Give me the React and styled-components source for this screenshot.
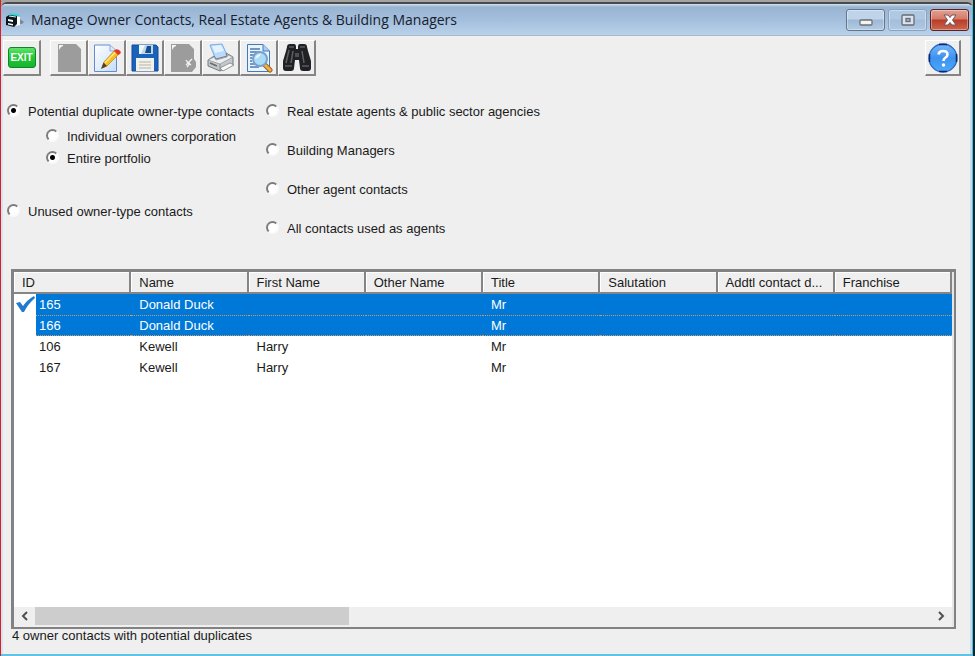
import React, { useState } from "react";
import styled, { createGlobalStyle, css } from "styled-components";

const GlobalStyle = createGlobalStyle`
    * {
        box-sizing: border-box;
    }

    body {
        margin: 0;
        font-family: "Liberation Sans", Arial, sans-serif;
        font-size: 13px;
        line-height: 20px;
        color: #1a1a1a;
        background: #efefef;
    }

    button, input {
        margin: 0;
        padding: 0;
        font: inherit;
    }
`;

const Screen = styled.div`
    display: flex;
    min-height: 100vh;
    padding-top: 2px;
    border-left: 1px solid #e01b24;
    border-right: 2px solid #10242c;
    background: #a4a4a4;
`;

const Window = styled.main`
    flex: 1;
    min-width: 0;
    display: flex;
    flex-direction: column;
    border-top: 2px solid #4a4a4a;
    border-right: 1px solid #3fc0e6;
    border-bottom: 2px solid #5fc3e4;
    border-radius: 6px 6px 0 0;
    background: #efefef;
    box-shadow: inset 2px 0 #d3e6f4, inset -2px 0 #c3dcf2;
`;

const TitleBar = styled.header`
    display: flex;
    align-items: center;
    height: 32px;
    padding: 0 3px 0 4px;
    border-bottom: 1px solid #a9b9cb;
    border-radius: 5px 5px 0 0;
    background: linear-gradient(#d4e2f0 0, #99b4d1 3px, #a5c0de 55%, #b9d1ea);
`;

const WindowTitle = styled.h1`
    flex: 1;
    margin: 0 0 0 6px;
    font-family: "Open Sans", "Noto Sans", sans-serif;
    font-size: 14px;
    font-weight: 400;
    line-height: 22px;
    white-space: nowrap;
    color: #17202c;
`;

const WindowButtons = styled.div`
    display: flex;
    gap: 3px;
`;

const captionColors = {
    normal: css`
        border-color: #63768e;
        background: linear-gradient(#c0d4e9 45%, #9db8d5 50%, #b4cce5);
    `,
    muted: css`
        border-color: #8ba3bf;
        background: linear-gradient(#b0c9e3 45%, #a3bedb 50%, #b0c8e3);
    `,
    close: css`
        border-color: #5c2223;
        background: linear-gradient(#e2a093 0, #d67a68 45%, #b83c25 50%, #cb6650);
    `,
};

const CaptionButton = styled.button`
    display: grid;
    place-items: center;
    width: 39px;
    height: 22px;
    border: 1px solid;
    border-radius: 3px;
    box-shadow: inset 0 0 0 1px rgba(255, 255, 255, 0.35);
    ${({ $tone }) => captionColors[$tone]}
`;

const Toolbar = styled.div`
    display: flex;
    padding: 4px 11px 0 2px;
`;

const ToolGroup = styled.div`
    display: flex;
    margin-left: ${({ $end }) => ($end ? "auto" : "9px")};
`;

const ToolButton = styled.button`
    display: grid;
    place-items: center;
    width: ${({ $narrow }) => ($narrow ? "36px" : "38px")};
    height: 36px;
    border: 1px solid #fff;
    border-right: 2px solid #858585;
    border-bottom: 2px solid #858585;
    background: #efefef;

    svg {
        display: block;
    }
`;

const ExitBadge = styled.span`
    width: 28px;
    height: 21px;
    border: 1px solid #12832a;
    border-radius: 3px;
    background: linear-gradient(#5fe36c, #22c837 50%, #14b52b);
    font-size: 10px;
    font-weight: 700;
    line-height: 19px;
    text-align: center;
    color: #fff;
`;

const Options = styled.form`
    display: grid;
    grid-template-columns: 259px 1fr;
    padding: 26px 12px 0 6px;
`;

const OptionList = styled.div`
    display: flex;
    flex-direction: column;
    align-items: flex-start;
    gap: ${({ $gap }) => $gap};
`;

const SubOptions = styled.div`
    display: flex;
    flex-direction: column;
    gap: 2px;
    padding: 5px 0 33px 39px;
`;

const Option = styled.label`
    display: flex;
    gap: 8px;
    white-space: nowrap;
`;

const Radio = styled.input`
    appearance: none;
    flex: none;
    width: 13px;
    height: 13px;
    margin-top: 2px;
    border: 2px solid;
    border-color: #7c7c7c #fafafa #fafafa #7c7c7c;
    border-radius: 50%;
    background: #fff;

    &:checked {
        background: radial-gradient(circle, #000 0 2px, #fff 3px);
    }
`;

const ListFrame = styled.section`
    flex: 1;
    display: flex;
    flex-direction: column;
    margin: 30px 16px 0 10px;
    border: 3px solid #828282;
    border-right-width: 2px;
    border-bottom-width: 2px;
    background: #fff;
    box-shadow: inset -2px 0 #e6e6e6;
    padding-right: 2px;
`;

const ContactTable = styled.table`
    width: 100%;
    table-layout: fixed;
    border-spacing: 0;
`;

const HeadCell = styled.th`
    height: 22px;
    padding: 2px 8px 0;
    border-right: 2px solid #858585;
    border-bottom: 2px solid #858585;
    background: #efefef;
    box-shadow: inset 1px 1px #fff;
    font-weight: 400;
    line-height: 18px;
    text-align: left;
    white-space: nowrap;
`;

const rowColors = css`
    ${({ $selected }) => $selected && css`
        background: #0078d7;
        color: #fff;
    `}
    ${({ $focused }) => $focused && css`
        border-top: 1px dotted #c99a64;
        border-bottom: 1px dotted #c99a64;
    `}
`;

const Cell = styled.td`
    height: 21px;
    padding: 0 8px;
    line-height: ${({ $focused }) => ($focused ? "19px" : "21px")};
    white-space: nowrap;
    ${rowColors}
`;

const IdCell = styled.td`
    height: 21px;
    padding: 0;
`;

const IdContent = styled.div`
    display: grid;
    grid-template-columns: 22px 1fr;
    height: 21px;
`;

const IdValue = styled.span`
    padding-left: 3px;
    line-height: ${({ $focused }) => ($focused ? "19px" : "21px")};
    ${rowColors}
`;

const ScrollBar = styled.div`
    display: flex;
    height: 20px;
    margin-top: auto;
    background: #efefef;
`;

const ScrollButton = styled.button`
    display: grid;
    place-items: center;
    width: 21px;
    height: 18px;
    border: 0;
    background: none;
`;

const ScrollTrack = styled.div`
    flex: 1;
`;

const ScrollThumb = styled.div`
    width: 35%;
    height: 18px;
    background: #cdcdcd;
`;

const StatusText = styled.p`
    margin: 0 11px;
    height: 25px;
    line-height: 14px;
`;

const AppIcon = () => (
    <svg width="20" height="18" viewBox="0 0 20 18" aria-hidden="true">
        <path d="M4 2 L13 3 L15 5 L5 5 Z" fill="#35d6d6" />
        <path d="M10 5 L15 6 V14 L10 15 Z" fill="#fff" />
        <path d="M15 8 L19 11 L17 13 L15 13 Z" fill="#7c8a97" />
        <path d="M1 6 L4 4 L12 5 V13 L9 16 L1 14 Z" fill="#0b171c" />
        <path d="M3 8 L8 9 V11 L3 10 Z M3 12 L8 13 V14.500 L3 13.500 Z" fill="#fff" />
        <path d="M4 5 L11 6" stroke="#dff6f8" />
    </svg>
);

const BlankIcon = () => (
    <svg width="26" height="30" viewBox="0 0 26 30" aria-hidden="true">
        <path d="M2 1 H20 L25 6 V29 H2 Z" fill="#9c9c9c" />
        <path d="M3 7 V2 H7 V3 L5 4 Z" fill="#f5f5f5" />
    </svg>
);

const DeleteIcon = () => (
    <svg width="26" height="30" viewBox="0 0 26 30" aria-hidden="true">
        <path d="M1 1 H19 L24 6 V16 L26 19 V24 L22 29 H1 Z" fill="#9c9c9c" />
        <path d="M2 7 V2 H6 V3 L4 4 Z" fill="#f5f5f5" />
        <path d="M16 17 L18 20 L16 22 M22 16 L18 20 L21 22 M17 24 L20 20" fill="none" stroke="#f2f2f2" strokeWidth="1.300" />
    </svg>
);

const EditIcon = () => (
    <svg width="30" height="30" viewBox="0 0 30 30" aria-hidden="true">
        <defs>
            <linearGradient id="paper" x1="0" y1="0" x2="1" y2="1">
                <stop offset="0" stopColor="#fff" />
                <stop offset="1" stopColor="#c3ddfb" />
            </linearGradient>
        </defs>
        <path d="M2.500 2 H18 L24.500 8 V28.500 H2.500 Z" fill="url(#paper)" stroke="#6689d3" />
        <path d="M18 2 V8 H24" fill="#dceafe" stroke="#8aa9df" />
        <path d="M10 25 L12 19 L23 7 L27 11 L15 23 Z" fill="#f7bd20" stroke="#c98a14" strokeWidth="0.800" />
        <path d="M13 20 L24 8.500" stroke="#ffe784" strokeWidth="1.500" />
        <path d="M9 26 L11.500 19.500 L15 23 Z" fill="#5b3d24" />
        <path d="M22 8 Q24 5 27 7 Q30 9 28 11 L26 12 Z" fill="#e0372d" />
    </svg>
);

const SaveIcon = () => (
    <svg width="28" height="28" viewBox="0 0 28 28" aria-hidden="true">
        <path d="M1 1 H25 L27 3 V27 H1 Z" fill="#1964ba" stroke="#114c92" />
        <path d="M8 1 H22 V10 H8 Z" fill="#bdd6eb" />
        <path d="M8 1 H14 L10 10 H8 Z" fill="#eef6fc" />
        <path d="M16 2 H20 V9 H14 Z" fill="#174c8c" />
        <path d="M5 14 H23 V27 H5 Z" fill="#f2f2ea" />
        <path d="M8 18 H20 M8 21 H20 M8 24 H20" stroke="#b4b4ac" />
    </svg>
);

const PrintIcon = () => (
    <svg width="30" height="30" viewBox="0 0 30 30" aria-hidden="true">
        <path d="M4 2 L16 1 L22 14 L10 17 Z" fill="#b8dafc" stroke="#7aabe4" />
        <path d="M6 3 L15 2 L18 8 L9 10 Z" fill="#e4f2ff" />
        <path d="M2 17 L8 13 L10 16 L21 13 L20 10 L27 14 V22 L14 28 L2 23 Z" fill="#c4c8cb" stroke="#747b80" />
        <path d="M2 17 L14 21 L27 14 L22 12 L21 14 L10 17 L8 14 Z" fill="#eceeef" stroke="#8b9195" strokeWidth="0.700" />
        <path d="M14 21 V28" stroke="#858b90" />
        <path d="M14 25 L24 20 L28 22 L17 28 Z" fill="#f7f8f8" stroke="#7d8489" strokeWidth="0.800" />
        <path d="M4 20 L11 23" stroke="#666c70" strokeWidth="1.500" />
    </svg>
);

const PreviewIcon = () => (
    <svg width="30" height="30" viewBox="0 0 30 30" aria-hidden="true">
        <path d="M3.500 1.500 H19 L25.500 8 V28.500 H3.500 Z" fill="#e9f4ff" stroke="#3f79c2" />
        <path d="M19 1.500 V8 H25" fill="#a8cff5" stroke="#3f79c2" />
        <path d="M6 6 H16 M6 9 H16 M6 12 H11 M6 15 H8 M6 18 H8 M6 21 H11 M6 24 H15" stroke="#4b79ad" strokeWidth="1.500" />
        <path d="M20 21 L26 27" stroke="#9b6218" strokeWidth="5" strokeLinecap="round" />
        <path d="M20 21 L26 27" stroke="#f2ad43" strokeWidth="3" strokeLinecap="round" />
        <circle cx="16" cy="16" r="7" fill="#a9dcfb" stroke="#7d9fc8" strokeWidth="2" />
        <path d="M11 16 Q12 11 17 11 Q15 15 11 16" fill="#e9f9ff" />
    </svg>
);

const BinocularsIcon = () => (
    <svg width="30" height="30" viewBox="0 0 30 30" aria-hidden="true">
        <path d="M5 4 Q5 1 8 1 H12 Q14 1 14 4 V6 H16 V4 Q16 1 18 1 H22 Q25 1 25 4 L26 8 L29 18 V25 Q29 28 26 28 H21 Q18 28 18 25 L17 17 H13 L12 25 Q12 28 9 28 H4 Q1 28 1 25 V18 L4 8 Z" fill="#202124" />
        <path d="M7 7 L4 20 M11 8 L9 20 M20 8 L22 20" stroke="#5d6064" strokeWidth="1.500" />
        <path d="M3 23 H10 M20 23 H27 M7 4 H12 M18 4 H23" stroke="#4a4d51" strokeWidth="2" />
        <path d="M13 10 H17 V14 H13 Z" fill="#4d5054" />
    </svg>
);

const HelpIcon = () => (
    <svg width="30" height="30" viewBox="0 0 30 30" aria-hidden="true">
        <defs>
            <linearGradient id="help" x1="0" y1="0" x2="0" y2="1">
                <stop offset="0" stopColor="#77b8fa" />
                <stop offset="0.500" stopColor="#3d92ee" />
                <stop offset="1" stopColor="#4fa9fa" />
            </linearGradient>
        </defs>
        <circle cx="15" cy="15" r="14" fill="url(#help)" stroke="#2c68c4" strokeWidth="1.300" />
        <path d="M11 1.500 H19 M11 28.500 H19 M1.500 11 V19 M28.500 11 V19" stroke="#13256e" strokeWidth="1.500" />
        <path d="M10.500 11.500 Q11 8 15 8 Q19.500 8 19.500 11.500 Q19.500 13.500 17 15 Q15.500 16 15.500 18" fill="none" stroke="#fff" strokeWidth="2.600" />
        <circle cx="15.500" cy="22" r="1.700" fill="#fff" />
    </svg>
);

const CheckIcon = () => (
    <svg width="21" height="20" viewBox="0 0 21 20" role="img" aria-label="Marked">
        <path d="M2 9 L6 8 L9 12 Q13 6 20 2 L21 4 Q14 10 10 18 H8 Z" fill="#2378cf" />
    </svg>
);

const Chevron = ({ d }) => (
    <svg width="9" height="10" viewBox="0 0 9 10" aria-hidden="true">
        <path d={d} fill="none" stroke="#505050" strokeWidth="2" />
    </svg>
);

const MinimizeIcon = () => (
    <svg width="14" height="14" viewBox="0 0 14 14" aria-hidden="true">
        <rect x="1" y="7" width="12" height="5" rx="1" fill="#f4f4f4" stroke="#6b6f76" strokeWidth="1.300" />
    </svg>
);

const MaximizeIcon = () => (
    <svg width="14" height="12" viewBox="0 0 14 12" aria-hidden="true">
        <rect x="1" y="1" width="12" height="10" rx="1" fill="#dde3ea" stroke="#666c76" strokeWidth="1.300" />
        <rect x="5" y="4.500" width="4" height="3" fill="#9db9d6" stroke="#666c76" strokeWidth="1.300" />
    </svg>
);

const CloseIcon = () => (
    <svg width="14" height="12" viewBox="0 0 14 12" aria-hidden="true">
        <path d="M1 1 H5 L7 3.500 L9 1 H13 L9.500 6 L13 11 H9 L7 8.500 L5 11 H1 L4.500 6 Z" fill="#fff" stroke="#6e565a" />
    </svg>
);

const tools = [
    { label: "New", Icon: BlankIcon },
    { label: "Edit", Icon: EditIcon },
    { label: "Save", Icon: SaveIcon },
    { label: "Delete", Icon: DeleteIcon },
    { label: "Print", Icon: PrintIcon },
    { label: "Preview", Icon: PreviewIcon },
    { label: "Find", Icon: BinocularsIcon },
];

const columns = [
    "ID",
    "Name",
    "First Name",
    "Other Name",
    "Title",
    "Salutation",
    "Addtl contact d...",
    "Franchise",
];

const contacts = [
    { id: 165, name: "Donald Duck", firstName: "", title: "Mr", marked: true, selected: true },
    { id: 166, name: "Donald Duck", firstName: "", title: "Mr", selected: true, focused: true },
    { id: 106, name: "Kewell", firstName: "Harry", title: "Mr" },
    { id: 167, name: "Kewell", firstName: "Harry", title: "Mr" },
];

const agentOptions = [
    { value: "agents", label: "Real estate agents & public sector agencies" },
    { value: "managers", label: "Building Managers" },
    { value: "other", label: "Other agent contacts" },
    { value: "all", label: "All contacts used as agents" },
];

function RadioOption({ group, value, selected, onSelect, children }) {
    return (
        <Option>
            <Radio
                type="radio"
                name={group}
                value={value}
                checked={selected === value}
                onChange={() => onSelect(value)}
            />
            {children}
        </Option>
    );
}

function ContactRow({ contact }) {
    const state = { $selected: contact.selected, $focused: contact.focused };

    return (
        <tr>
            <IdCell>
                <IdContent>
                    <span>{contact.marked && <CheckIcon />}</span>
                    <IdValue {...state}>{contact.id}</IdValue>
                </IdContent>
            </IdCell>
            <Cell {...state}>{contact.name}</Cell>
            <Cell {...state}>{contact.firstName}</Cell>
            <Cell {...state} />
            <Cell {...state}>{contact.title}</Cell>
            <Cell {...state} />
            <Cell {...state} />
            <Cell {...state} />
        </tr>
    );
}

export default function App() {
    const [filter, setFilter] = useState("duplicates");
    const [scope, setScope] = useState("portfolio");

    return (
        <>
            <GlobalStyle />
            <Screen>
                <Window>
                    <TitleBar>
                        <AppIcon />
                        <WindowTitle>Manage Owner Contacts, Real Estate Agents &amp; Building Managers</WindowTitle>
                        <WindowButtons>
                            <CaptionButton $tone="normal" aria-label="Minimize"><MinimizeIcon /></CaptionButton>
                            <CaptionButton $tone="muted" aria-label="Maximize"><MaximizeIcon /></CaptionButton>
                            <CaptionButton $tone="close" aria-label="Close"><CloseIcon /></CaptionButton>
                        </WindowButtons>
                    </TitleBar>

                    <Toolbar>
                        <ToolButton><ExitBadge>EXIT</ExitBadge></ToolButton>
                        <ToolGroup>
                            {tools.map(({ label, Icon }) => (
                                <ToolButton key={label} aria-label={label}><Icon /></ToolButton>
                            ))}
                        </ToolGroup>
                        <ToolGroup $end>
                            <ToolButton $narrow aria-label="Help"><HelpIcon /></ToolButton>
                        </ToolGroup>
                    </Toolbar>

                    <Options>
                        <OptionList $gap="0">
                            <RadioOption group="filter" value="duplicates" selected={filter} onSelect={setFilter}>
                                Potential duplicate owner-type contacts
                            </RadioOption>
                            <SubOptions>
                                <RadioOption group="scope" value="individual" selected={scope} onSelect={setScope}>
                                    Individual owners corporation
                                </RadioOption>
                                <RadioOption group="scope" value="portfolio" selected={scope} onSelect={setScope}>
                                    Entire portfolio
                                </RadioOption>
                            </SubOptions>
                            <RadioOption group="filter" value="unused" selected={filter} onSelect={setFilter}>
                                Unused owner-type contacts
                            </RadioOption>
                        </OptionList>
                        <OptionList $gap="19px">
                            {agentOptions.map(({ value, label }) => (
                                <RadioOption key={value} group="filter" value={value} selected={filter} onSelect={setFilter}>
                                    {label}
                                </RadioOption>
                            ))}
                        </OptionList>
                    </Options>

                    <ListFrame>
                        <ContactTable>
                            <thead>
                                <tr>
                                    {columns.map((column) => (
                                        <HeadCell key={column} scope="col">{column}</HeadCell>
                                    ))}
                                </tr>
                            </thead>
                            <tbody>
                                {contacts.map((contact) => (
                                    <ContactRow key={contact.id} contact={contact} />
                                ))}
                            </tbody>
                        </ContactTable>
                        <ScrollBar>
                            <ScrollButton aria-label="Scroll left"><Chevron d="M7 1 L3 5 L7 9" /></ScrollButton>
                            <ScrollTrack>
                                <ScrollThumb />
                            </ScrollTrack>
                            <ScrollButton aria-label="Scroll right"><Chevron d="M2 1 L6 5 L2 9" /></ScrollButton>
                        </ScrollBar>
                    </ListFrame>
                    <StatusText>4 owner contacts with potential duplicates</StatusText>
                </Window>
            </Screen>
        </>
    );
}
